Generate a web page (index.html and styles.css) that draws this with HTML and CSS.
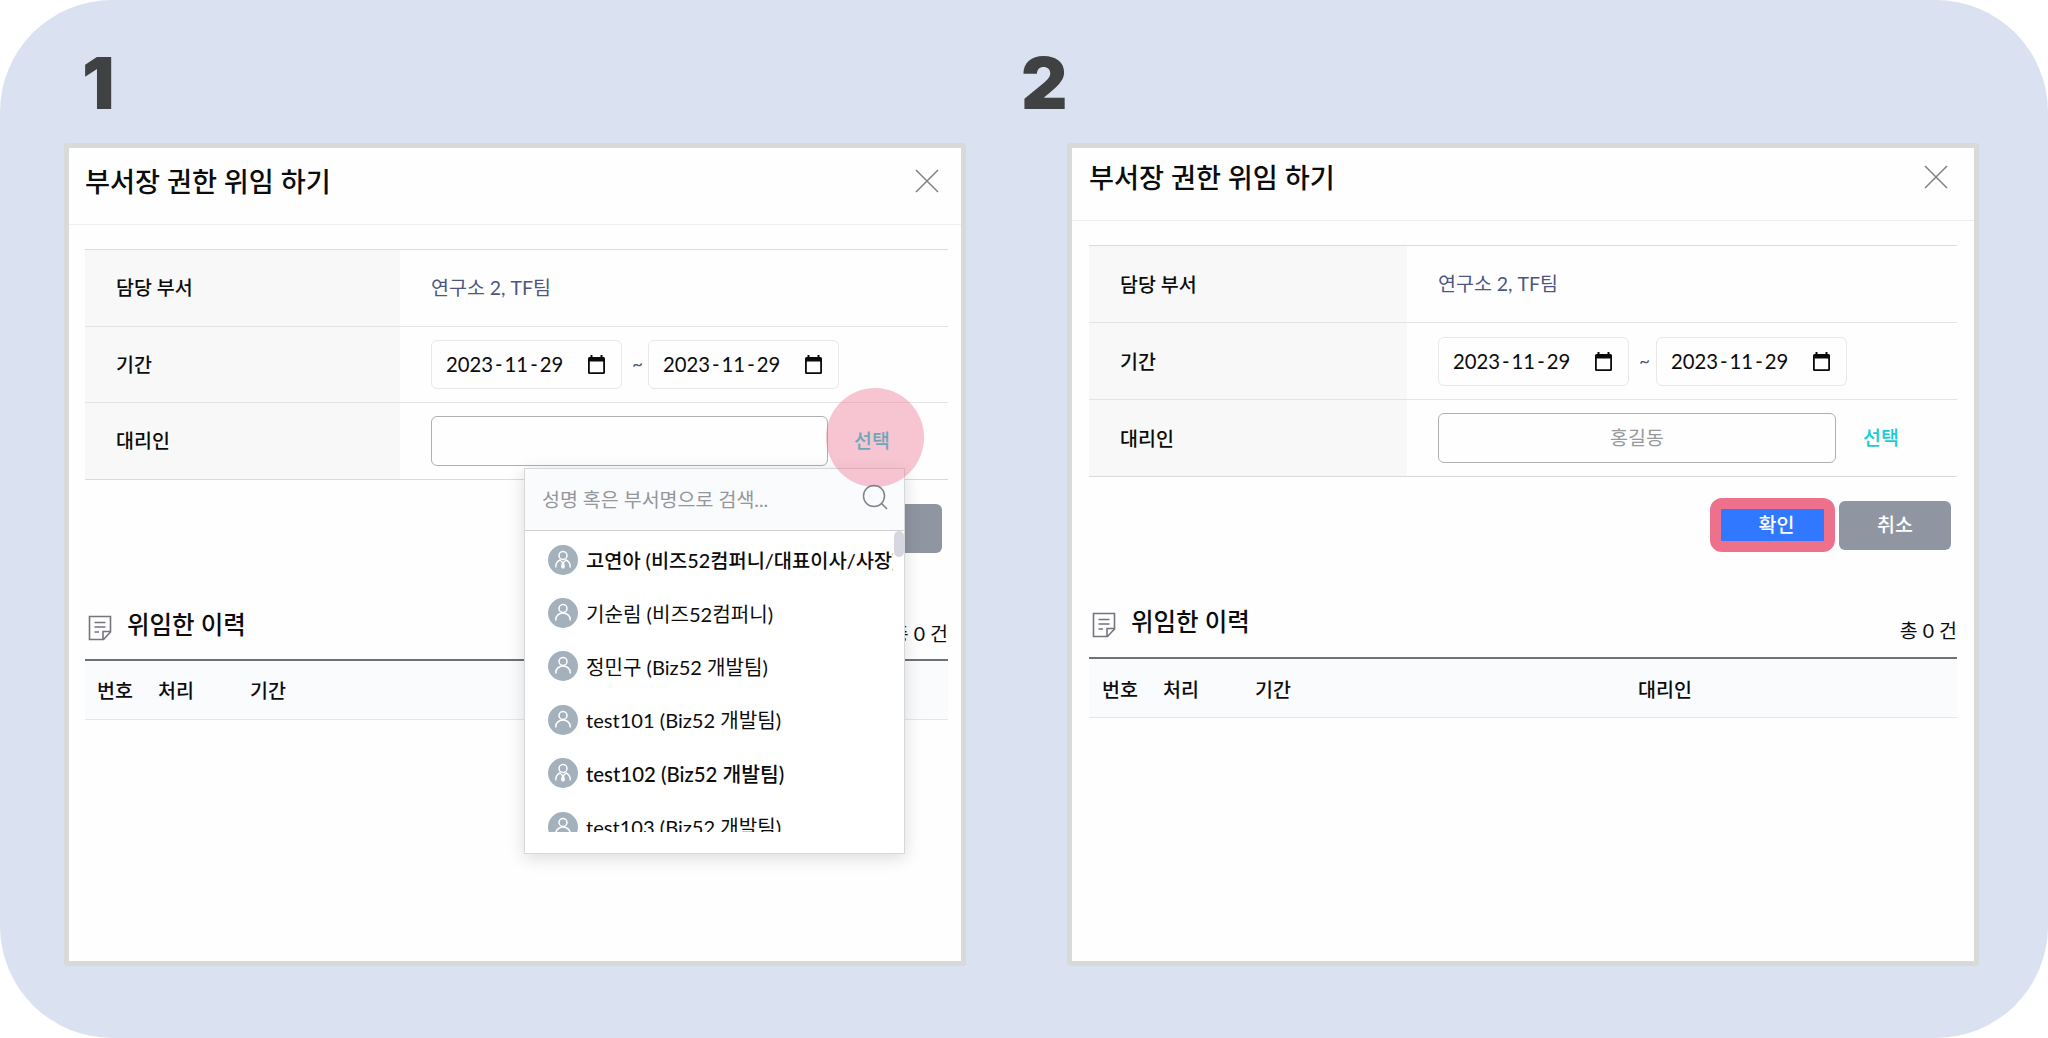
FILE: index.html
```html
<!DOCTYPE html>
<html lang="ko">
<head>
    <meta charset="UTF-8">
    <meta name="viewport" content="width=device-width, initial-scale=1.0">
    <title>부서장 권한 위임 하기</title>
    <link rel="stylesheet" href="styles.css">
</head>
<body>
    <!-- 공용 아이콘 -->
    <svg class="defs" width="0" height="0">
        <symbol id="close" viewBox="0 0 24 24">
            <path d="M1 1L23 23M23 1L1 23" fill="none" stroke="#7f8084" stroke-width="1.5"/>
        </symbol>
        <symbol id="calendar" viewBox="0 0 17 19">
            <path d="M2.500 0h2v2h8V0h2v2H15.500A1.500 1.500 0 0 1 17 3.500v14a1.500 1.500 0 0 1-1.500 1.500h-14A1.500 1.500 0 0 1 0 17.500v-14A1.500 1.500 0 0 1 1.500 2h1zM1.800 6.500v10.700h13.400V6.500z" fill="#0a0a0a" fill-rule="evenodd"/>
        </symbol>
        <symbol id="note" viewBox="0 0 24 26">
            <path d="M1.500 1.500h21v15.500l-7 7.500h-14zM22.500 16.500h-7.500v8M6.500 7.500h11M6.500 12h11M6.500 17h4.500" fill="none" stroke="#74757f" stroke-width="1.600"/>
        </symbol>
        <symbol id="search" viewBox="0 0 26 26">
            <circle cx="12" cy="12" r="10.500" fill="none" stroke="#808388" stroke-width="1.500"/>
            <path d="M19.500 19.500L25 25" stroke="#808388" stroke-width="1.600"/>
        </symbol>
        <symbol id="user" viewBox="0 0 30 30">
            <circle cx="15" cy="15" r="15" fill="#a4b0bc"/>
            <circle cx="15" cy="10.500" r="4" fill="none" stroke="#fff" stroke-width="1.500"/>
            <path d="M7.800 22.500v-1a7.200 6.500 0 0 1 14.400 0v1" fill="none" stroke="#fff" stroke-width="1.500"/>
        </symbol>
        <symbol id="manager" viewBox="0 0 30 30">
            <circle cx="15" cy="15" r="15" fill="#a4b0bc"/>
            <circle cx="15" cy="10.500" r="4" fill="none" stroke="#fff" stroke-width="1.500"/>
            <path d="M7.800 22.500v-1q0-4.500 4.200-6.500l3 3 3-3q4.200 2 4.200 6.500v1" fill="none" stroke="#fff" stroke-width="1.400"/>
            <path d="M14 17h2l1 5-2 2-2-2z" fill="#fff"/>
        </symbol>
    </svg>

    <div class="board">
        <section class="step step-1">
            <div class="step-number">1</div>
            <div class="modal">
                <div class="modal-header">
                    <h2>부서장 권한 위임 하기</h2>
                    <svg class="close"><use href="#close"/></svg>
                </div>
                <div class="form">
                    <div class="row">
                        <div class="label">담당 부서</div>
                        <div class="value">연구소 2, TF팀</div>
                    </div>
                    <div class="row">
                        <div class="label">기간</div>
                        <div class="value">
                            <div class="date"><span>2023<i>-</i>11<i>-</i>29</span><svg><use href="#calendar"/></svg></div>
                            <span class="tilde">~</span>
                            <div class="date"><span>2023<i>-</i>11<i>-</i>29</span><svg><use href="#calendar"/></svg></div>
                        </div>
                    </div>
                    <div class="row">
                        <div class="label">대리인</div>
                        <div class="value">
                            <div class="agent"></div>
                            <a class="select">선택</a>
                        </div>
                    </div>
                </div>
                <div class="buttons">
                    <div class="btn cancel"></div>
                </div>
                <div class="history-title">
                    <svg><use href="#note"/></svg>
                    <h3>위임한 이력</h3>
                    <span class="total">총 0 건</span>
                </div>
                <div class="history-head">
                    <span>번호</span><span>처리</span><span>기간</span>
                </div>

                <div class="dropdown">
                    <div class="search">
                        <span>성명 혹은 부서명으로 검색...</span>
                    </div>
                    <div class="list">
                        <div class="user bold chief"><svg><use href="#manager"/></svg><span>고연아 (비즈52컴퍼니/대표이사/사장)</span></div>
                        <div class="user"><svg><use href="#user"/></svg><span>기순림 (비즈52컴퍼니)</span></div>
                        <div class="user"><svg><use href="#user"/></svg><span>정민구 (Biz52 개발팀)</span></div>
                        <div class="user"><svg><use href="#user"/></svg><span>test101 (Biz52 개발팀)</span></div>
                        <div class="user bold"><svg><use href="#manager"/></svg><span>test102 (Biz52 개발팀)</span></div>
                        <div class="user"><svg><use href="#user"/></svg><span>test103 (Biz52 개발팀)</span></div>
                    </div>
                    <div class="thumb"></div>
                </div>
                <div class="spot"></div>
                <svg class="search-icon"><use href="#search"/></svg>
            </div>
        </section>

        <section class="step step-2">
            <div class="step-number">2</div>
            <div class="modal">
                <div class="modal-header">
                    <h2>부서장 권한 위임 하기</h2>
                    <svg class="close"><use href="#close"/></svg>
                </div>
                <div class="form">
                    <div class="row">
                        <div class="label">담당 부서</div>
                        <div class="value">연구소 2, TF팀</div>
                    </div>
                    <div class="row">
                        <div class="label">기간</div>
                        <div class="value">
                            <div class="date"><span>2023<i>-</i>11<i>-</i>29</span><svg><use href="#calendar"/></svg></div>
                            <span class="tilde">~</span>
                            <div class="date"><span>2023<i>-</i>11<i>-</i>29</span><svg><use href="#calendar"/></svg></div>
                        </div>
                    </div>
                    <div class="row">
                        <div class="label">대리인</div>
                        <div class="value">
                            <div class="agent">홍길동</div>
                            <a class="select">선택</a>
                        </div>
                    </div>
                </div>
                <div class="buttons">
                    <div class="btn confirm">확인</div>
                    <div class="btn cancel">취소</div>
                </div>
                <div class="history-title">
                    <svg><use href="#note"/></svg>
                    <h3>위임한 이력</h3>
                    <span class="total">총 0 건</span>
                </div>
                <div class="history-head">
                    <span>번호</span><span>처리</span><span>기간</span><span>대리인</span>
                </div>
            </div>
        </section>
    </div>
</body>
</html>
```
FILE: styles.css
```css
* {
    box-sizing: border-box;
}
body {
    margin: 0;
    background: #fff;
    font-family: Lato, "Noto Sans CJK KR", sans-serif;
    font-size: 19.5px;
    line-height: 28px;
    color: #0c0c0c;
}
h2, h3 {
    margin: 0;
    font-weight: 500;
}
svg {
    display: block;
    flex: none;
}
.defs {
    position: absolute;
}
.board {
    display: flex;
    height: 1038px;
    padding-left: 64px;
    background: #dae2f1;
    border-radius: 112px;
    overflow: hidden;
}
.step-1 {
    width: 902px;
}
.step-2 {
    width: 912px;
    margin-left: 101px;
}
.step-number {
    height: 143px;
    padding: 47px 0 0 18px;
    font-family: Inter, sans-serif;
    font-size: 72px;
    font-weight: 900;
    line-height: 72px;
    color: #404143;
}
.step-2 .step-number {
    padding-left: 0;
    margin-left: -46px;
}
.modal {
    position: relative;
    height: 823px;
    background: #fefefe;
    border: 5px solid #d7dad9;
    border-radius: 3px;
}
.modal-header {
    display: flex;
    justify-content: space-between;
    align-items: center;
    height: 77px;
    padding: 0 22px 10px 16px;
    border-bottom: 1px solid #eeeeee;
}
.modal-header h2 {
    padding-top: 1px;
    font-size: 27.2px;
    line-height: 40px;
}
.close {
    width: 24px;
    height: 24px;
}

/* 입력 폼 */
.form {
    margin: 24px 13px 0 16px;
    border-top: 1px solid #dadbdc;
}
.row {
    display: flex;
    height: 76.5px;
    border-bottom: 1px solid #e3e4e5;
}
.row:last-child {
    border-color: #d9dadb;
}
.label {
    display: flex;
    align-items: center;
    width: 315px;
    padding: 1px 0 0 31px;
    background: #f8f8f8;
    font-weight: 500;
}
.value {
    display: flex;
    align-items: center;
    padding-left: 31px;
    color: #4d5683;
}
.date {
    display: flex;
    align-items: center;
    justify-content: space-between;
    width: 191px;
    height: 49px;
    padding: 0 16px 0 14px;
    border: 1px solid #e8e8e8;
    border-radius: 6px;
    font-size: 20.3px;
    color: #0c0c0c;
}
.date i {
    margin: 0 2px;
    font-style: normal;
}
.date svg {
    width: 17px;
    height: 19px;
}
.tilde {
    width: 26px;
    padding-left: 10px;
    font-size: 19px;
}
.agent {
    display: flex;
    align-items: center;
    justify-content: center;
    width: 397px;
    height: 50px;
    border: 1.5px solid #adafb1;
    border-radius: 6px;
    color: #97999d;
}
.select {
    margin-left: 26px;
    font-weight: 500;
    color: #17ccd6;
}

/* 버튼 */
.buttons {
    display: flex;
    justify-content: flex-end;
    align-items: center;
    gap: 4px;
    height: 54px;
    margin: 22px 19px 0 0;
}
.btn {
    display: flex;
    align-items: center;
    justify-content: center;
    width: 112px;
    height: 49px;
    border-radius: 6px;
    font-weight: 500;
    color: #fff;
}
.cancel {
    background: #9095a2;
}
.confirm {
    width: 125px;
    height: 54px;
    padding-left: 8px;
    background: #2f78ff;
    border: 11px solid #ee718c;
    border-radius: 12px;
}

/* 위임 이력 */
.history-title {
    display: flex;
    height: 103px;
    margin: 0 13px 0 16px;
    padding-top: 59px;
}
.history-title svg {
    width: 24px;
    height: 26px;
    margin-left: 3px;
}
.history-title h3 {
    margin: -4px 0 0 15px;
    font-size: 24.5px;
    line-height: 28px;
}
.total {
    margin: 5px 0 0 auto;
}
.history-head {
    display: flex;
    align-items: center;
    height: 61px;
    margin: 0 13px 0 16px;
    padding: 2px 0 0 12px;
    background: #fafbfd;
    border-top: 2px solid #707174;
    border-bottom: 1px solid #e4e6e8;
    font-weight: 500;
}
.history-head span:nth-child(1) {
    width: 61px;
}
.history-head span:nth-child(2) {
    width: 92px;
}
.history-head span:nth-child(3) {
    width: 383px;
}

/* 대리인 검색 */
.dropdown {
    position: absolute;
    left: 455px;
    top: 320px;
    width: 381px;
    height: 386px;
    background: #fff;
    border: 1px solid #d5d7d9;
    box-shadow: 0 4px 16px rgba(0,0,0,0.14);
}
.search {
    display: flex;
    align-items: center;
    height: 62px;
    padding-left: 17px;
    background: #fafbfd;
    border-bottom: 1px solid #cfd1d3;
    color: #94969a;
}
.search-icon {
    position: absolute;
    left: 793px;
    top: 336px;
    width: 26px;
    height: 26px;
}
.list {
    width: 368px;
    height: 301px;
    padding-top: 2px;
    overflow: hidden;
}
.user {
    display: flex;
    align-items: center;
    gap: 8px;
    height: 53.4px;
    padding-left: 23px;
    font-size: 20.1px;
    white-space: nowrap;
}
.user svg {
    width: 30px;
    height: 30px;
}
.user span {
    padding-top: 1px;
}
.bold {
    font-size: 20.4px;
    font-weight: 500;
}
.chief {
    font-size: 19.8px;
}
.thumb {
    position: absolute;
    right: 0;
    top: 62px;
    width: 10px;
    height: 26px;
    background: #d6d7e1;
    border-radius: 5px;
}
.spot {
    position: absolute;
    left: 757px;
    top: 240px;
    width: 98px;
    height: 99px;
    background: rgba(238,112,142,0.4);
    border-radius: 50%;
}

/* 두 번째 화면 */
.step-2 .modal-header {
    height: 73px;
    padding: 0 26px 14px 17px;
}
.step-2 .form {
    margin: 24px 17px 0 17px;
}
.step-2 .row {
    height: 77px;
}
.step-2 .label {
    width: 318px;
}
.step-2 .tilde {
    width: 27px;
}
.step-2 .agent {
    width: 398px;
}
.step-2 .select {
    margin-left: 27px;
}
.step-2 .buttons {
    margin: 21px 23px 0 0;
}
.step-2 .history-title,
.step-2 .history-head {
    margin-left: 17px;
    margin-right: 17px;
}
.step-2 .history-title {
    height: 105px;
    padding-top: 60px;
}
.step-2 .history-head {
    padding: 3px 0 0 13px;
}
```
